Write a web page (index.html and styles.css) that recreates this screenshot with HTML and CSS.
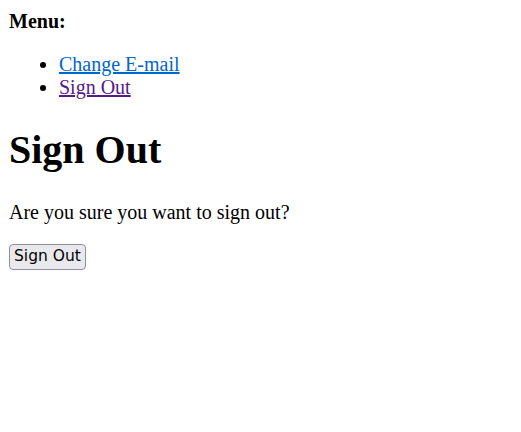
FILE: index.html
```html
<!DOCTYPE html>
<html>
<head>
<meta charset="utf-8">
<link rel="stylesheet" href="styles.css">
</head>
<body class="page">
<strong class="menu-label">Menu:</strong>
<ul class="menu">
  <li><a class="link" href="#email">Change E-mail</a></li>
  <li><a class="link visited" href="#signout">Sign Out</a></li>
</ul>
<h1 class="title">Sign Out</h1>
<p class="text">Are you sure you want to sign out?</p>
<form class="form">
  <button class="btn" type="button">Sign Out</button>
</form>
</body>
</html>
```
FILE: styles.css
```css
html { background: #fff; }
.page {
  margin: 9px;
  font-family: "Liberation Serif", "Times New Roman", serif;
  font-size: 20px;
  line-height: 23px;
  color: #000;
}
.menu-label { display: block; font-weight: bold; margin-top: 1px; }
.menu { margin: 20px 0; padding-left: 50px; }
.link { color: #0066cc; text-decoration: underline; }
.link.visited { color: #551a8b; }
.title {
  font-size: 40px;
  line-height: 46px;
  font-weight: bold;
  margin: 28px 0 28px;
}
.text { margin: 20px 0 19px; }
.form { margin: 0; }
.btn {
  font-family: "DejaVu Sans", "Liberation Sans", sans-serif;
  font-size: 15.5px;
  line-height: 19px;
  padding: 2px 4px 3px 4px;
  background: #e9e9ed;
  border: 1px solid #8f8f9d;
  border-radius: 4px;
  color: #000;
  margin-top: 0;
}
```
